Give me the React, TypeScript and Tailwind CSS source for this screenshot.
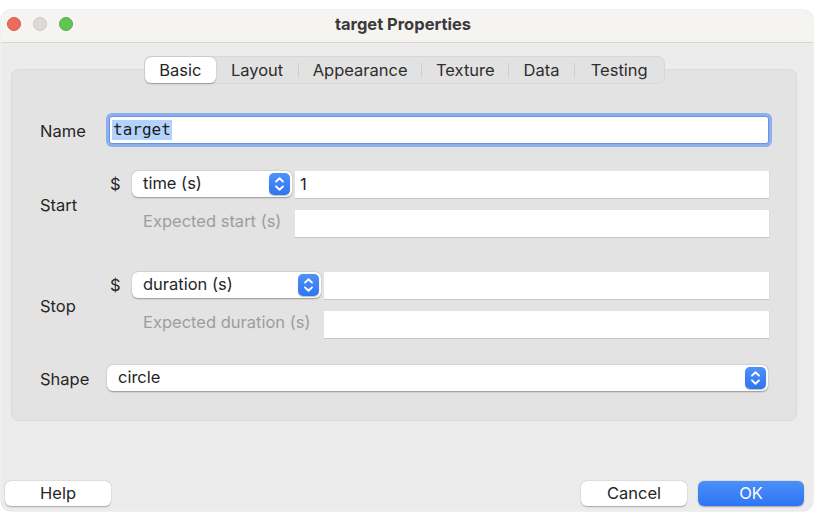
import React from 'react'

const ui = { fontFamily: 'Inter, "Liberation Sans", Arial, sans-serif' }

function Chevrons() {
  return (
    <div className="w-[21px] h-[22px] rounded-[5px] bg-gradient-to-b from-[#4e91f8] to-[#2f74f3] flex items-center justify-center shadow-[0_0.5px_1px_rgba(0,0,0,0.25)]">
      <svg width="21" height="22" viewBox="0 0 21 22" fill="none">
        <path d="M7 8.6 L10.5 5.2 L14 8.6" stroke="white" strokeWidth="1.9" strokeLinecap="round" strokeLinejoin="round" />
        <path d="M7 13.4 L10.5 16.8 L14 13.4" stroke="white" strokeWidth="1.9" strokeLinecap="round" strokeLinejoin="round" />
      </svg>
    </div>
  )
}

function Popup({ label, className }: { label: string; className: string }) {
  return (
    <div
      className={`h-[26px] bg-white rounded-[6px] shadow-[0_0.5px_1.5px_rgba(0,0,0,0.35)] flex items-center justify-between pl-[11px] pr-[2px] ${className}`}
    >
      <span className="text-[16.5px] leading-[20px] pb-[2px] text-[#262626]">{label}</span>
      <Chevrons />
    </div>
  )
}

function Field({ value }: { value?: string }) {
  return (
    <div className="flex-1 h-[28px] bg-white border-b border-[#c6c6c6] shadow-[0.5px_0_0_#d4d4d4] flex items-center pl-[5px]">
      {value && <span className="text-[16.5px] leading-[20px] pb-[2px] text-[#1f1f1f]">{value}</span>}
    </div>
  )
}

const tabs = [
  { name: 'Basic', w: 'w-[72px]' },
  { name: 'Layout', w: 'w-[82px]' },
  { name: 'Appearance', w: 'w-[123px]' },
  { name: 'Texture', w: 'w-[86px]' },
  { name: 'Data', w: 'w-[65px]' },
  { name: 'Testing', w: 'w-[89px]' },
]

export default function App() {
  return (
    <div className="w-[819px] h-[526px] bg-white pt-[10px] pl-[1px]" style={ui}>
      <div className="w-[812px] h-[501px] rounded-[10px] bg-[#ececec] flex flex-col overflow-hidden shadow-[0_0_0_0.5px_rgba(0,0,0,0.12)]">
        {/* title bar */}
        <div className="h-[33px] shrink-0 bg-[#f6f4f0] border-b border-[#d7d6d4] flex items-start">
          <div className="w-[73px] flex gap-[12px] pl-[6px] pt-[7px]">
            <div className="w-[14px] h-[14px] rounded-full bg-[#ec6a5e] border border-[#d9574c]" />
            <div className="w-[14px] h-[14px] rounded-full bg-[#dcdad6] border border-[#cbc9c5]" />
            <div className="w-[14px] h-[14px] rounded-full bg-[#61c554] border border-[#52ad45]" />
          </div>
          <div className="flex-1 text-center pt-[3px] text-[16.5px] leading-[22px] font-bold text-[#3a3a3a]">
            target Properties
          </div>
          <div className="w-[81px]" />
        </div>

        {/* body */}
        <div className="flex-1 flex flex-col">
          <div className="ml-[10px] w-[786px] pt-[13px]">
            {/* segmented tabs */}
            <div className="relative z-10 mx-auto w-[521px] h-[28px] rounded-[7px] bg-[#e2e2e2] border border-[#d8d8d8] flex items-center">
              {tabs.map((t, i) => (
                <React.Fragment key={t.name}>
                  {i > 1 && <div className="w-px h-[14px] bg-[#cdcdcd]" />}
                  {i === 0 ? (
                    <div className={`${t.w} h-[26px] rounded-[6px] bg-white shadow-[0_0.5px_1.5px_rgba(0,0,0,0.3)] flex items-center justify-center text-[16.5px] text-[#262626]`}>
                      {t.name}
                    </div>
                  ) : (
                    <div className={`${t.w} h-[26px] flex items-center justify-center text-[16.5px] text-[#2e2e2e]`}>
                      {t.name}
                    </div>
                  )}
                </React.Fragment>
              ))}
            </div>

            {/* group box */}
            <div className="-mt-[15px] h-[352px] rounded-[7px] bg-[#e3e3e3] border border-[#dadada] pt-[46px] pl-[28px] pr-[27px] flex flex-col text-[16.5px] leading-[20px] text-[#262626]">
              {/* Name */}
              <div className="flex items-center h-[28px]">
                <div className="w-[66px] pt-[2px]">Name</div>
                <div className="ml-[3px] w-[660px] h-[28px] bg-white border border-[#6893e6] rounded-[3px] shadow-[0_0_0_3px_#8eafee] flex items-center pl-[2px]">
                  <span
                    className="bg-[#b4d3fb] leading-[20px] px-[1px] text-[16px] text-[#1a1a1a]"
                    style={{ fontFamily: '"DejaVu Sans Mono", "Liberation Mono", monospace' }}
                  >
                    target
                  </span>
                </div>
              </div>

              {/* Start */}
              <div className="flex items-center mt-[27px] h-[67px]">
                <div className="w-[66px]">Start</div>
                <div className="flex-1 flex flex-col gap-[11px]">
                  <div className="flex items-start h-[28px]">
                    <div className="w-[26px] h-[26px] pl-[4px] flex items-center">$</div>
                    <Popup label="time (s)" className="w-[160px]" />
                    <div className="w-[3px]" />
                    <Field value="1" />
                  </div>
                  <div className="flex items-center h-[28px]">
                    <div className="w-[189px] pl-[37px] pb-[6px] text-[#9d9d9d]">Expected start (s)</div>
                    <Field />
                  </div>
                </div>
              </div>

              {/* Stop */}
              <div className="flex items-center mt-[34px] h-[67px]">
                <div className="w-[66px]">Stop</div>
                <div className="flex-1 flex flex-col gap-[11px]">
                  <div className="flex items-start h-[28px]">
                    <div className="w-[26px] h-[26px] pl-[4px] flex items-center">$</div>
                    <Popup label="duration (s)" className="w-[189px]" />
                    <div className="w-[3px]" />
                    <Field />
                  </div>
                  <div className="flex items-center h-[28px]">
                    <div className="w-[218px] pl-[37px] pb-[6px] text-[#9d9d9d]">Expected duration (s)</div>
                    <Field />
                  </div>
                </div>
              </div>

              {/* Shape */}
              <div className="flex items-center mt-[26px] h-[26px]">
                <div className="w-[66px] pt-[2px]">Shape</div>
                <Popup label="circle" className="ml-[1px] w-[661px]" />
              </div>
            </div>
          </div>

          {/* buttons */}
          <div className="mt-auto flex items-center pl-[4px] pr-[9px] pb-[5px] text-[16.5px]">
            <button className="w-[106px] h-[25px] rounded-[6px] bg-white shadow-[0_0.5px_1.5px_rgba(0,0,0,0.3)] text-[#262626] leading-[20px] pb-[2px]">
              Help
            </button>
            <div className="flex-1" />
            <button className="w-[106px] h-[25px] rounded-[6px] bg-white shadow-[0_0.5px_1.5px_rgba(0,0,0,0.3)] text-[#262626] leading-[20px] pb-[2px]">
              Cancel
            </button>
            <button className="ml-[11px] w-[106px] h-[25px] rounded-[6px] bg-gradient-to-b from-[#4b8ff8] to-[#2f74f4] shadow-[0_0.5px_1.5px_rgba(0,0,0,0.3)] text-white leading-[20px] pb-[2px]">
              OK
            </button>
          </div>
        </div>
      </div>
    </div>
  )
}
